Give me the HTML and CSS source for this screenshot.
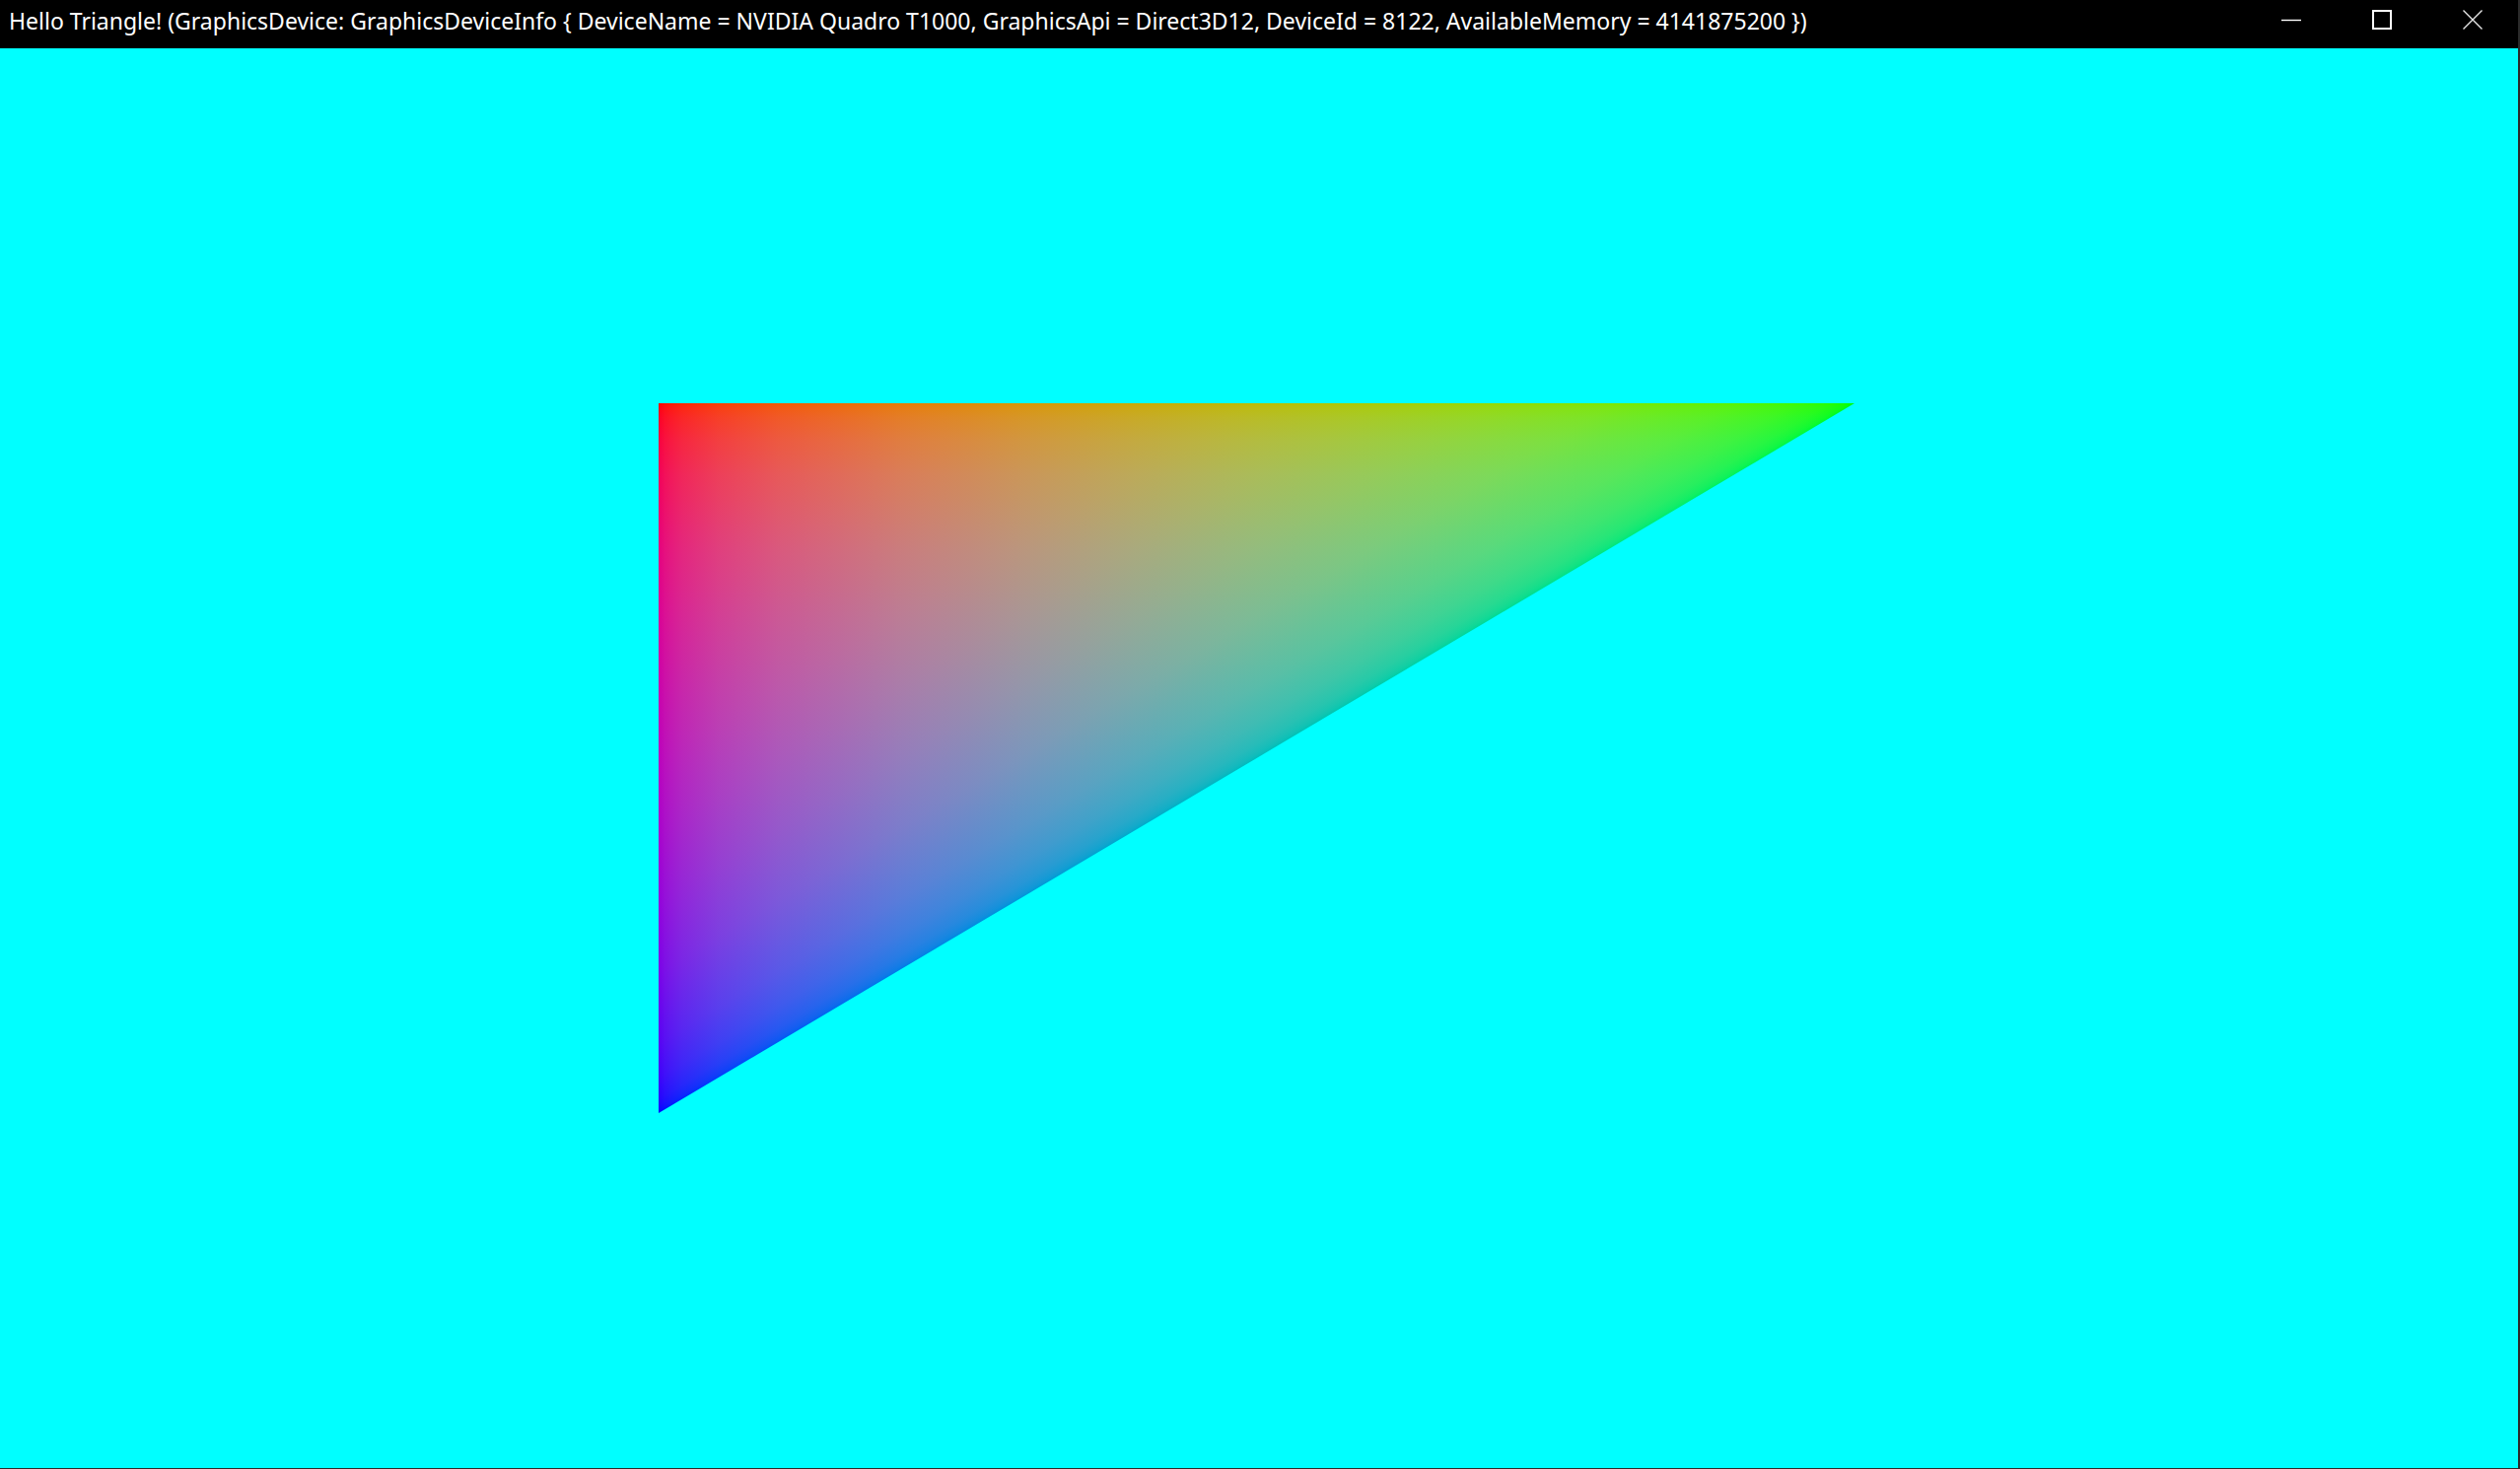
FILE: index.html
```html
<!DOCTYPE html>
<html lang="en">
<head>
<meta charset="utf-8">
<title>Hello Triangle!</title>
<link rel="stylesheet" href="styles.css">
</head>
<body>
<div class="window">
  <header class="titlebar">
    <div class="title">Hello Triangle! (GraphicsDevice: GraphicsDeviceInfo { DeviceName = NVIDIA Quadro T1000, GraphicsApi = Direct3D12, DeviceId = 8122, AvailableMemory = 4141875200 })</div>
    <div class="controls">
      <div class="btn">
        <svg width="20" height="20" viewBox="0 0 20 20"><line x1="0" y1="10.5" x2="20" y2="10.5" stroke="#ffffff" stroke-width="1.4"/></svg>
      </div>
      <div class="btn">
        <svg width="20" height="20" viewBox="0 0 20 20"><rect x="1" y="1" width="18" height="18" fill="none" stroke="#ffffff" stroke-width="2"/></svg>
      </div>
      <div class="btn">
        <svg width="20" height="20" viewBox="0 0 20 20"><path d="M0.5 0.5 L19.5 19.5 M19.5 0.5 L0.5 19.5" stroke="#e6e6e6" stroke-width="1.4" fill="none"/></svg>
      </div>
    </div>
  </header>
  <main class="viewport">
    <div class="triangle"></div>
  </main>
</div>
</body>
</html>
```
FILE: styles.css
```css
html, body {
  margin: 0;
  padding: 0;
  background: #2b2b2b;
}
body {
  width: 2556px;
  height: 1490px;
  overflow: hidden;
}
.window {
  width: 2554px;
  height: 1489px;
  display: flex;
  flex-direction: column;
  background: #00ffff;
}
.titlebar {
  height: 49px;
  flex: 0 0 49px;
  background: #000000;
  display: flex;
  align-items: flex-start;
  justify-content: space-between;
}
.title {
  color: #ffffff;
  font-family: "Noto Sans", "Open Sans", sans-serif;
  font-size: 23px;
  line-height: 23px;
  padding: 10px 0 0 9px;
  white-space: nowrap;
}
.controls {
  display: flex;
}
.btn {
  width: 92px;
  height: 40px;
  display: flex;
  align-items: center;
  justify-content: center;
}
.btn svg {
  display: block;
}
.viewport {
  flex: 1 1 auto;
  background: #00ffff;
}
.triangle {
  width: 1213px;
  height: 720px;
  margin: 360px 0 0 668px;
  clip-path: polygon(0 0, 100% 0, 0 100%);
  background-color: #000;
  background-blend-mode: lighten;
  background-image:
    linear-gradient(to bottom right,
      rgb(255,0,0) 0%, rgb(243,0,0) 5%, rgb(231,0,0) 10%, rgb(218,0,0) 15%,
      rgb(203,0,0) 20%, rgb(188,0,0) 25%, rgb(170,0,0) 30%, rgb(149,0,0) 35%,
      rgb(124,0,0) 40%, rgb(89,0,0) 45%, rgb(63,0,0) 47.5%, rgb(39,0,0) 49%,
      rgb(25,0,0) 49.5%, rgb(16,0,0) 49.75%, rgb(0,0,0) 50%, rgb(0,0,0) 100%),
    linear-gradient(to right,
      rgb(0,0,0) 0%, rgb(0,16,0) 0.5%, rgb(0,25,0) 1%, rgb(0,39,0) 2%,
      rgb(0,63,0) 5%, rgb(0,89,0) 10%, rgb(0,124,0) 20%, rgb(0,149,0) 30%,
      rgb(0,170,0) 40%, rgb(0,188,0) 50%, rgb(0,203,0) 60%, rgb(0,218,0) 70%,
      rgb(0,231,0) 80%, rgb(0,243,0) 90%, rgb(0,255,0) 100%),
    linear-gradient(to bottom,
      rgb(0,0,0) 0%, rgb(0,0,16) 0.5%, rgb(0,0,25) 1%, rgb(0,0,39) 2%,
      rgb(0,0,63) 5%, rgb(0,0,89) 10%, rgb(0,0,124) 20%, rgb(0,0,149) 30%,
      rgb(0,0,170) 40%, rgb(0,0,188) 50%, rgb(0,0,203) 60%, rgb(0,0,218) 70%,
      rgb(0,0,231) 80%, rgb(0,0,243) 90%, rgb(0,0,255) 100%);
}
```
